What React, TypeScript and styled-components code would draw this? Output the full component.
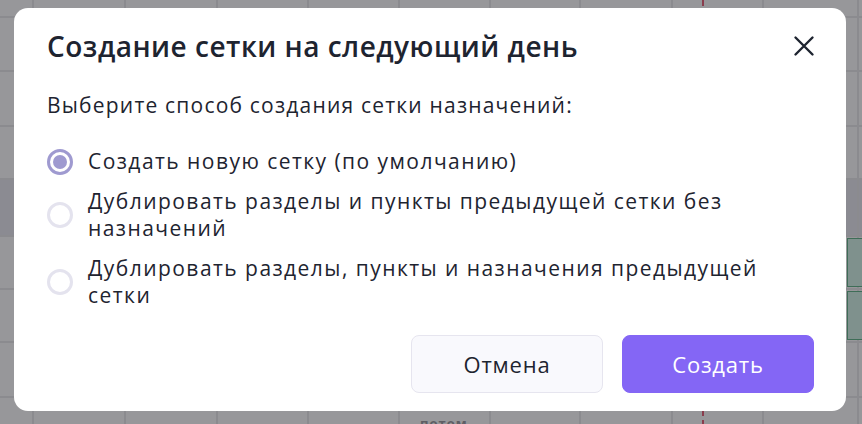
import React, { useState } from "react";
import styled, { createGlobalStyle } from "styled-components";

const GlobalStyle = createGlobalStyle`
  html, body { margin: 0; padding: 0; }
  body {
    width: 862px;
    height: 424px;
    overflow: hidden;
    font-family: "Open Sans", "Noto Sans", sans-serif;
    background: #97979a;
  }
`;

const colWidths = [34, 92, 92, 91, 91, 91, 90, 92, 91, 95, 60];
const rowHeights = [18, 54, 55, 53, 57, 53, 53, 55, 40];

const Board = styled.div`
  display: grid;
  grid-template-columns: ${colWidths.map((w) => `${w}px`).join(" ")};
  grid-template-rows: ${rowHeights.map((h) => `${h}px`).join(" ")};
  width: 862px;
  height: 424px;
  overflow: hidden;
  background: #97979a;
`;

const Cell = styled.div<{ $band?: boolean; $green?: boolean }>`
  box-sizing: border-box;
  position: relative;
  border-right: 2px solid #8b8b8f;
  border-bottom: 2px solid #8b8b8f;
  background: ${(p) => (p.$band ? "#8b8b92" : "#97979a")};
  ${(p) =>
    p.$green
      ? `
    &::after {
      content: "";
      position: absolute;
      left: -12px;
      top: 1px;
      bottom: 1px;
      width: 18px;
      background: #7f918d;
      border: 1px solid #3e6d57;
    }
  `
      : ""}
`;

const CellLabel = styled.span`
  display: block;
  padding: 16px 0 0 20px;
  font-family: "Open Sans", sans-serif;
  font-size: 13px;
  font-weight: 700;
  letter-spacing: 1px;
  color: #5e5e64;
`;

const Marker = styled.div`
  position: absolute;
  left: 702px;
  top: 0;
  width: 2px;
  height: 424px;
  background: repeating-linear-gradient(
    to bottom,
    #8a3d4d 0 6px,
    transparent 6px 10px
  );
`;

const Overlay = styled.div`
  position: fixed;
  inset: 0;
  display: flex;
  align-items: flex-start;
  justify-content: flex-start;
  padding: 8px 16px 0 14px;
`;

const Dialog = styled.div`
  box-sizing: border-box;
  width: 832px;
  height: 403px;
  background: #ffffff;
  border-radius: 14px;
  padding: 22px 32px 18px 33px;
  display: flex;
  flex-direction: column;
  color: #1e2430;
`;

const Header = styled.div`
  display: flex;
  align-items: center;
  justify-content: space-between;
`;

const Title = styled.h2`
  margin: 0;
  font-size: 28px;
  line-height: 32px;
  font-weight: 600;
  letter-spacing: 0.5px;
  color: #1e2430;
`;

const CloseButton = styled.button`
  width: 24px;
  height: 24px;
  padding: 0;
  margin-right: -2px;
  border: none;
  background: transparent;
  display: flex;
  align-items: center;
  justify-content: center;
  cursor: pointer;
  color: #1e2430;
`;

const Subtitle = styled.p`
  margin: 30px 0 0;
  font-size: 21px;
  line-height: 27px;
  letter-spacing: 1.2px;
  color: #1e2430;
`;

const Options = styled.div`
  display: flex;
  flex-direction: column;
  gap: 13px;
  margin-top: 29px;
`;

const Option = styled.label`
  display: flex;
  align-items: center;
  gap: 15px;
  cursor: pointer;
`;

const RadioDot = styled.span<{ $checked: boolean }>`
  box-sizing: border-box;
  flex: 0 0 26px;
  width: 26px;
  height: 26px;
  border-radius: 50%;
  border: 3px solid ${(p) => (p.$checked ? "#9f9ad0" : "#e4e3ee")};
  background: #ffffff;
  display: flex;
  align-items: center;
  justify-content: center;
  &::after {
    content: "";
    width: 14px;
    height: 14px;
    border-radius: 50%;
    background: ${(p) => (p.$checked ? "#9f9ad0" : "transparent")};
  }
`;

const OptionText = styled.span`
  font-size: 21px;
  line-height: 27px;
  letter-spacing: 1.45px;
  color: #1e2430;
  max-width: 670px;
`;

const Footer = styled.div`
  margin-top: auto;
  display: flex;
  justify-content: flex-end;
  gap: 19px;
`;

const Button = styled.button<{ $primary?: boolean }>`
  box-sizing: border-box;
  width: 192px;
  height: 58px;
  border-radius: 8px;
  font-family: "Open Sans", "Noto Sans", sans-serif;
  font-size: 22px;
  letter-spacing: 0.8px;
  cursor: pointer;
  border: 1px solid ${(p) => (p.$primary ? "#8466f5" : "#e6e5ef")};
  background: ${(p) => (p.$primary ? "#8466f5" : "#f9f9fd")};
  color: ${(p) => (p.$primary ? "#ffffff" : "#1e2430")};
`;

const options = [
  "Создать новую сетку (по умолчанию)",
  "Дублировать разделы и пункты предыдущей сетки без назначений",
  "Дублировать разделы, пункты и назначения предыдущей сетки",
];

export default function App() {
  const [selected, setSelected] = useState(0);
  const cells: React.ReactNode[] = [];
  rowHeights.forEach((_, r) => {
    colWidths.forEach((__, c) => {
      cells.push(
        <Cell
          key={`${r}-${c}`}
          $band={r === 4}
          $green={(r === 5 || r === 6) && c === 10}
        >
          {r === 8 && c === 5 ? <CellLabel>потом</CellLabel> : null}
        </Cell>
      );
    });
  });

  return (
    <>
      <GlobalStyle />
      <Board>{cells}</Board>
      <Marker />
      <Overlay>
        <Dialog>
          <Header>
            <Title>Создание сетки на следующий день</Title>
            <CloseButton aria-label="Закрыть">
              <svg width="24" height="24" viewBox="0 0 24 24" fill="none">
                <path
                  d="M3.5 3.5L20.5 20.5M20.5 3.5L3.5 20.5"
                  stroke="currentColor"
                  strokeWidth="2.4"
                  strokeLinecap="round"
                />
              </svg>
            </CloseButton>
          </Header>
          <Subtitle>Выберите способ создания сетки назначений:</Subtitle>
          <Options>
            {options.map((text, i) => (
              <Option key={i} onClick={() => setSelected(i)}>
                <RadioDot $checked={selected === i} />
                <OptionText>{text}</OptionText>
              </Option>
            ))}
          </Options>
          <Footer>
            <Button>Отмена</Button>
            <Button $primary>Создать</Button>
          </Footer>
        </Dialog>
      </Overlay>
    </>
  );
}
